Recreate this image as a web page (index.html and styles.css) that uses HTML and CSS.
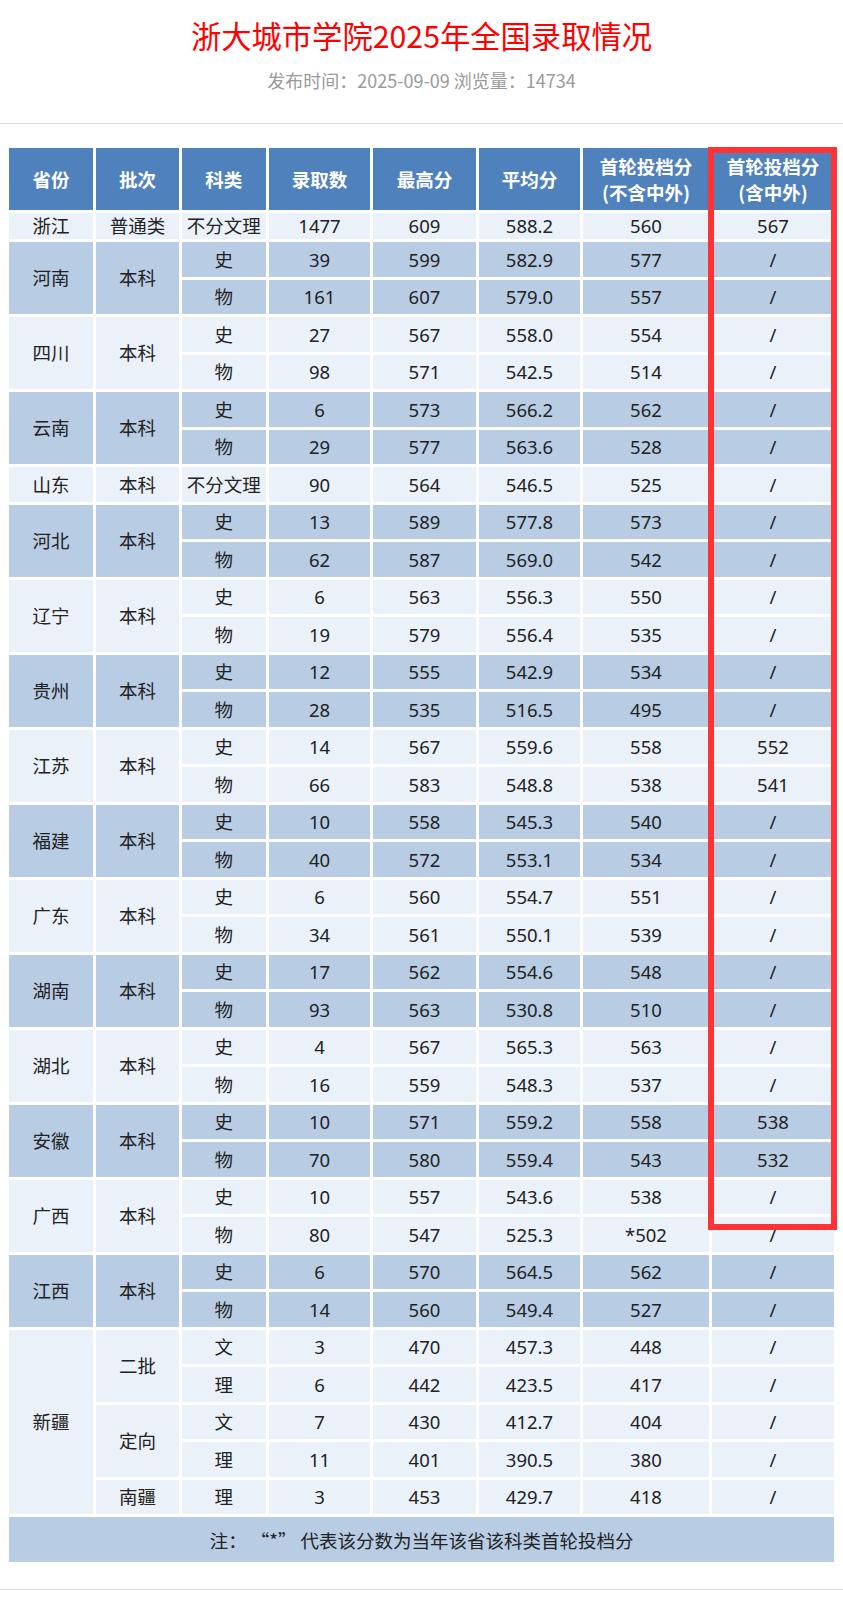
FILE: index.html
```html
<!DOCTYPE html>
<html lang="zh-CN">
<head>
<meta charset="utf-8">
<title>浙大城市学院2025年全国录取情况</title>
<link rel="stylesheet" href="styles.css">
</head>
<body>
<div class="head">
  <h1 class="title">浙大城市学院2025年全国录取情况</h1>
  <div class="meta">发布时间：2025-09-09 浏览量：14734</div>
</div>
<div class="rule"></div>
<div class="sheet">
  <table class="grid">
    <colgroup>
      <col class="c1"><col class="c2"><col class="c3"><col class="c4"><col class="c5"><col class="c6"><col class="c7"><col class="c8">
    </colgroup>
    <thead>
      <tr class="hd">
        <th>省份</th><th>批次</th><th>科类</th><th>录取数</th><th>最高分</th><th>平均分</th><th>首轮投档分<br>(不含中外)</th><th>首轮投档分<br>(含中外)</th>
      </tr>
    </thead>
    <tbody>
      <tr class="l short"><td>浙江</td><td>普通类</td><td>不分文理</td><td>1477</td><td>609</td><td>588.2</td><td>560</td><td>567</td></tr>

      <tr class="d"><td rowspan="2">河南</td><td rowspan="2">本科</td><td>史</td><td>39</td><td>599</td><td>582.9</td><td>577</td><td>/</td></tr>
      <tr class="d"><td>物</td><td>161</td><td>607</td><td>579.0</td><td>557</td><td>/</td></tr>

      <tr class="l"><td rowspan="2">四川</td><td rowspan="2">本科</td><td>史</td><td>27</td><td>567</td><td>558.0</td><td>554</td><td>/</td></tr>
      <tr class="l"><td>物</td><td>98</td><td>571</td><td>542.5</td><td>514</td><td>/</td></tr>

      <tr class="d"><td rowspan="2">云南</td><td rowspan="2">本科</td><td>史</td><td>6</td><td>573</td><td>566.2</td><td>562</td><td>/</td></tr>
      <tr class="d"><td>物</td><td>29</td><td>577</td><td>563.6</td><td>528</td><td>/</td></tr>

      <tr class="l"><td>山东</td><td>本科</td><td>不分文理</td><td>90</td><td>564</td><td>546.5</td><td>525</td><td>/</td></tr>

      <tr class="d"><td rowspan="2">河北</td><td rowspan="2">本科</td><td>史</td><td>13</td><td>589</td><td>577.8</td><td>573</td><td>/</td></tr>
      <tr class="d"><td>物</td><td>62</td><td>587</td><td>569.0</td><td>542</td><td>/</td></tr>

      <tr class="l"><td rowspan="2">辽宁</td><td rowspan="2">本科</td><td>史</td><td>6</td><td>563</td><td>556.3</td><td>550</td><td>/</td></tr>
      <tr class="l"><td>物</td><td>19</td><td>579</td><td>556.4</td><td>535</td><td>/</td></tr>

      <tr class="d"><td rowspan="2">贵州</td><td rowspan="2">本科</td><td>史</td><td>12</td><td>555</td><td>542.9</td><td>534</td><td>/</td></tr>
      <tr class="d"><td>物</td><td>28</td><td>535</td><td>516.5</td><td>495</td><td>/</td></tr>

      <tr class="l"><td rowspan="2">江苏</td><td rowspan="2">本科</td><td>史</td><td>14</td><td>567</td><td>559.6</td><td>558</td><td>552</td></tr>
      <tr class="l"><td>物</td><td>66</td><td>583</td><td>548.8</td><td>538</td><td>541</td></tr>

      <tr class="d"><td rowspan="2">福建</td><td rowspan="2">本科</td><td>史</td><td>10</td><td>558</td><td>545.3</td><td>540</td><td>/</td></tr>
      <tr class="d"><td>物</td><td>40</td><td>572</td><td>553.1</td><td>534</td><td>/</td></tr>

      <tr class="l"><td rowspan="2">广东</td><td rowspan="2">本科</td><td>史</td><td>6</td><td>560</td><td>554.7</td><td>551</td><td>/</td></tr>
      <tr class="l"><td>物</td><td>34</td><td>561</td><td>550.1</td><td>539</td><td>/</td></tr>

      <tr class="d"><td rowspan="2">湖南</td><td rowspan="2">本科</td><td>史</td><td>17</td><td>562</td><td>554.6</td><td>548</td><td>/</td></tr>
      <tr class="d"><td>物</td><td>93</td><td>563</td><td>530.8</td><td>510</td><td>/</td></tr>

      <tr class="l"><td rowspan="2">湖北</td><td rowspan="2">本科</td><td>史</td><td>4</td><td>567</td><td>565.3</td><td>563</td><td>/</td></tr>
      <tr class="l"><td>物</td><td>16</td><td>559</td><td>548.3</td><td>537</td><td>/</td></tr>

      <tr class="d"><td rowspan="2">安徽</td><td rowspan="2">本科</td><td>史</td><td>10</td><td>571</td><td>559.2</td><td>558</td><td>538</td></tr>
      <tr class="d"><td>物</td><td>70</td><td>580</td><td>559.4</td><td>543</td><td>532</td></tr>

      <tr class="l"><td rowspan="2">广西</td><td rowspan="2">本科</td><td>史</td><td>10</td><td>557</td><td>543.6</td><td>538</td><td>/</td></tr>
      <tr class="l"><td>物</td><td>80</td><td>547</td><td>525.3</td><td>*502</td><td>/</td></tr>

      <tr class="d"><td rowspan="2">江西</td><td rowspan="2">本科</td><td>史</td><td>6</td><td>570</td><td>564.5</td><td>562</td><td>/</td></tr>
      <tr class="d"><td>物</td><td>14</td><td>560</td><td>549.4</td><td>527</td><td>/</td></tr>

      <tr class="l"><td rowspan="5">新疆</td><td rowspan="2">二批</td><td>文</td><td>3</td><td>470</td><td>457.3</td><td>448</td><td>/</td></tr>
      <tr class="l"><td>理</td><td>6</td><td>442</td><td>423.5</td><td>417</td><td>/</td></tr>
      <tr class="l"><td rowspan="2">定向</td><td>文</td><td>7</td><td>430</td><td>412.7</td><td>404</td><td>/</td></tr>
      <tr class="l"><td>理</td><td>11</td><td>401</td><td>390.5</td><td>380</td><td>/</td></tr>
      <tr class="l"><td>南疆</td><td>理</td><td>3</td><td>453</td><td>429.7</td><td>418</td><td>/</td></tr>

      <tr class="d note"><td colspan="8">注：&nbsp;“*”&nbsp;代表该分数为当年该省该科类首轮投档分</td></tr>
    </tbody>
  </table>
  <div class="mark"></div>
</div>
<div class="rule bottom"></div>
</body>
</html>
```

FILE: styles.css
```css
html, body {
  margin: 0;
  padding: 0;
  background: #ffffff;
}

body {
  font-family: "Noto Sans", "Noto Sans CJK SC", sans-serif;
  color: #222222;
}

.head {
  padding-top: 14px;
  text-align: center;
}

.title {
  margin: 0;
  font-family: "Noto Sans CJK SC", sans-serif;
  font-weight: 400;
  font-size: 30.3px;
  line-height: 42px;
  color: #ff0000;
}

.meta {
  margin-top: 12px;
  font-family: "Noto Sans CJK SC", sans-serif;
  font-size: 18px;
  line-height: 25px;
  color: #9a9a9a;
}

.rule {
  margin-top: 30px;
  height: 1px;
  background: #dddddd;
}

.rule.bottom {
  margin-top: 24px;
}

.sheet {
  position: relative;
  margin-top: 21px;
  padding-left: 6px;
}

.grid {
  table-layout: fixed;
  width: 831.3px;
  border-collapse: separate;
  border-spacing: 3px;
  font-size: 18.5px;
}

.c1 { width: 84px; }
.c2 { width: 83px; }
.c3 { width: 83.7px; }
.c4 { width: 101.6px; }
.c5 { width: 102.4px; }
.c6 { width: 101.6px; }
.c7 { width: 125.4px; }
.c8 { width: 122.6px; }

.grid th,
.grid td {
  padding: 0;
  text-align: center;
  vertical-align: middle;
  white-space: nowrap;
}

.grid th {
  height: 62px;
  background: #4f81bd;
  color: #ffffff;
  font-family: "Noto Sans CJK SC", sans-serif;
  font-weight: 700;
  line-height: 26px;
}

.grid td {
  height: 34.5px;
  line-height: 24px;
}

.grid tr.short td {
  height: 26.3px;
}

.grid tr.l td {
  background: #ebf1f9;
}

.grid tr.d td {
  background: #b8cce4;
}

.grid tr.note td {
  height: 45px;
  font-family: "Noto Sans CJK SC", sans-serif;
}

.mark {
  position: absolute;
  left: 708.3px;
  top: 2.3px;
  width: 128.4px;
  height: 1082.7px;
  box-sizing: border-box;
  border: 6.7px solid #ff3333;
  pointer-events: none;
}
```
